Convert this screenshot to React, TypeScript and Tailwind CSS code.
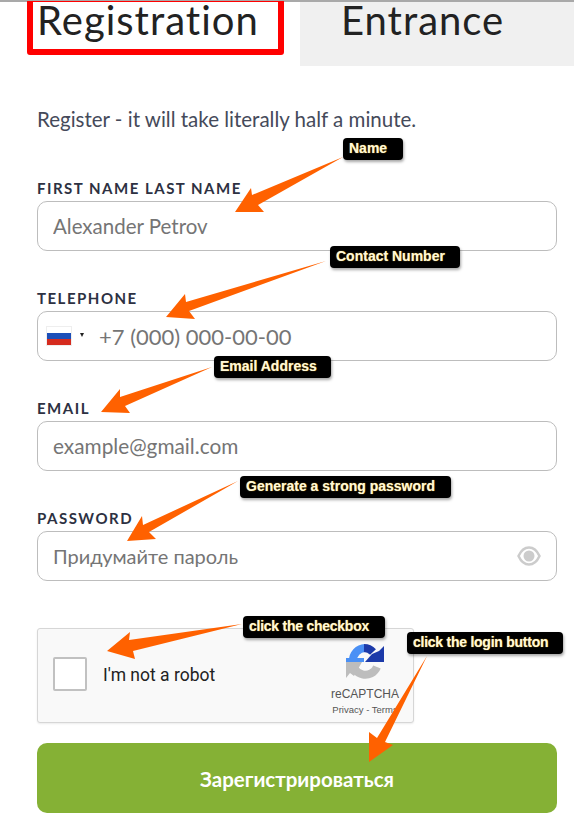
const labelCls = "block h-[13px] text-[15px] leading-[13px] font-bold tracking-[1.5px] uppercase text-[#2d3142]"
const inputCls =
  "min-w-0 flex-1 bg-transparent text-[#333] outline-none placeholder:text-[#757575] placeholder:opacity-100"
const boxCls = "mt-[6px] flex h-[50px] items-center rounded-[10px] border border-[#bdbdbd] pl-[15px] pr-[15px]"

// Callouts laid over the form: [text, left, top, width]
const callouts: [string, number, number, number][] = [
  ["Name", 343, 138, 60],
  ["Contact Number", 330, 246, 130],
  ["Email Address", 214, 356, 117],
  ["Generate a strong password", 240, 476, 211],
  ["click the checkbox", 243, 616, 142],
  ["click the login button", 407, 632, 156],
]

const arrows = [
  "343,157 252,195 251,188 235,212 264,212 258,205",
  "326,261 186,302 185,294 166,317 195,319 189,311",
  "212,367 120,397 120,389 101,412 130,413 125,406",
  "238,481 143,525 142,516 127,541 156,539 149,532",
  "242,624 129,640 130,632 107,651 135,659 133,651",
  "427,656 377,738 369,732 369,762 393,745 385,742",
]

function Field({ label, children }: { label: string; children: React.ReactNode }) {
  return (
    <div>
      <label className={labelCls}>{label}</label>
      <div className={boxCls}>{children}</div>
    </div>
  )
}

function RecaptchaLogo() {
  return (
    <svg width="38" height="38" viewBox="0 0 38 38" fill="none">
      <path d="M7 18 A12.5 12.5 0 0 0 31 24" stroke="#bdbdbd" strokeWidth="8" />
      <polygon points="0,19 0,35 4,30 8,33 16,19" fill="#bdbdbd" />
      <path d="M7 18 A12.5 12.5 0 0 1 19 5" stroke="#4a90f5" strokeWidth="8" />
      <rect x="0" y="15" width="18" height="4" fill="#4a90f5" />
      <path d="M18 5 A12.5 12.5 0 0 1 27 9" stroke="#1c3aa9" strokeWidth="8" />
      <polygon points="19,19 38,19 38,3 33,8 26,11" fill="#1c3aa9" />
      <polygon points="18,10 24,12 20,16" fill="#f9f9f9" />
    </svg>
  )
}

function Eye() {
  return (
    <svg width="24" height="20" viewBox="0 0 24 20" fill="none">
      <path d="M1.500 10 C4 4.500 8 1.500 12 1.500 C16 1.500 20 4.500 22.500 10 C20 15.500 16 18.500 12 18.500 C8 18.500 4 15.500 1.500 10 Z" stroke="#cccccc" strokeWidth="2.500" />
      <circle cx="12" cy="10" r="5.500" fill="#cccccc" />
    </svg>
  )
}

export default function App() {
  return (
    <div className="relative h-[825px] w-[574px] overflow-hidden bg-white font-['Lato','Noto_Sans',sans-serif]">
      <div className="h-[2px] bg-[#a9a9a9]" />

      {/* Tabs */}
      <div className="flex h-[64px] items-start pl-[27px]">
        <div className="relative -mt-[1px] h-[54px] w-[257px] rounded-b-[3px] border-x-[6px] border-t-[1px] border-b-[6px] border-[#ff0000] pl-[4px] text-[40px] leading-[36px] tracking-[1px] text-[#222]">
          Registration
        </div>
        <div className="ml-[16px] h-[64px] flex-1 bg-[#f0f0f0] pl-[41px] text-[40px] leading-[36px] tracking-[1px] text-[#222]">
          Entrance
        </div>
      </div>

      <div className="px-[37px] pr-[17px]">
        <p className="mt-[41px] h-[24px] text-[20.500px] leading-[24px] text-[#454a5a]">
          Register - it will take literally half a minute.
        </p>

        <div className="mt-[51px] flex flex-col gap-[41px]">
          <Field label="First name last name">
            <input className={`${inputCls} text-[20.500px]`} placeholder="Alexander Petrov" />
          </Field>
          <Field label="Telephone">
            <div className="-ml-[7px] mr-[8px] flex items-center">
              <div className="flex h-[20px] w-[26px] flex-col border border-[#eeeeee]">
                <div className="flex-1 bg-white" />
                <div className="flex-1 bg-[#1c4fb8]" />
                <div className="flex-1 bg-[#d52b1e]" />
              </div>
              <div className="ml-[8px] mb-[3px] h-0 w-0 border-x-[2.5px] border-t-[4px] border-x-transparent border-t-[#222]" />
            </div>
            <input className={`${inputCls} ml-[7px] text-[22px]`} placeholder="+7 (000) 000-00-00" />
          </Field>
          <Field label="Email">
            <input className={`${inputCls} text-[20.800px]`} placeholder="example@gmail.com" />
          </Field>
          <Field label="Password">
            <input className={`${inputCls} text-[20px]`} placeholder="Придумайте пароль" />
            <Eye />
          </Field>
        </div>

        {/* Captcha */}
        <div className="mt-[47px] flex h-[95px] w-[377px] rounded-[3px] border border-[#d6d6d6] bg-[#f9f9f9] font-['Roboto',sans-serif] shadow-[0_1px_2px_rgba(0,0,0,0.08)]">
          <div className="mt-[28px] ml-[15px] h-[34px] w-[34px] rounded-[2px] border-2 border-[#c1c1c1] bg-white" />
          <span className="mt-[36px] ml-[16px] text-[17.500px] leading-[20px] text-[#222]">I'm not a robot</span>
          <div className="ml-auto mr-[5px] flex w-[86px] flex-col items-center pt-[14px]">
            <RecaptchaLogo />
            <span className="mt-[5px] text-[12px] leading-[16px] text-[#555] font-['Liberation_Sans',sans-serif]">reCAPTCHA</span>
            <span className="mt-[1px] whitespace-nowrap text-[9.500px] leading-[14px] text-[#555] font-['Liberation_Sans',sans-serif]">Privacy - Terms</span>
          </div>
        </div>

        <button className="mt-[20px] flex h-[70px] w-full items-center justify-center rounded-[10px] bg-[#85b135] pt-[2px] text-[20.500px] font-bold text-white">
          Зарегистрироваться
        </button>
      </div>

      {/* Annotation layer */}
      <svg className="pointer-events-none absolute left-0 top-0" width="574" height="825">
        {arrows.map((p) => (
          <polygon key={p} points={p} fill="#ff6100" />
        ))}
      </svg>
      {callouts.map(([text, left, top, width]) => (
        <div
          key={text}
          className={`absolute h-[22px] rounded-[4px] bg-black pl-[6px] font-['Liberation_Sans',sans-serif] text-[14px] leading-[21px] font-bold whitespace-nowrap text-[#fff8d8] shadow-[1px_2px_3px_rgba(0,0,0,0.35)] [text-shadow:0_0_1px_#d9a520] ${
            text.startsWith("click") ? "tracking-[-0.25px]" : ""
          }`}
          style={{ left, top, width }}
        >
          {text}
        </div>
      ))}
    </div>
  )
}
